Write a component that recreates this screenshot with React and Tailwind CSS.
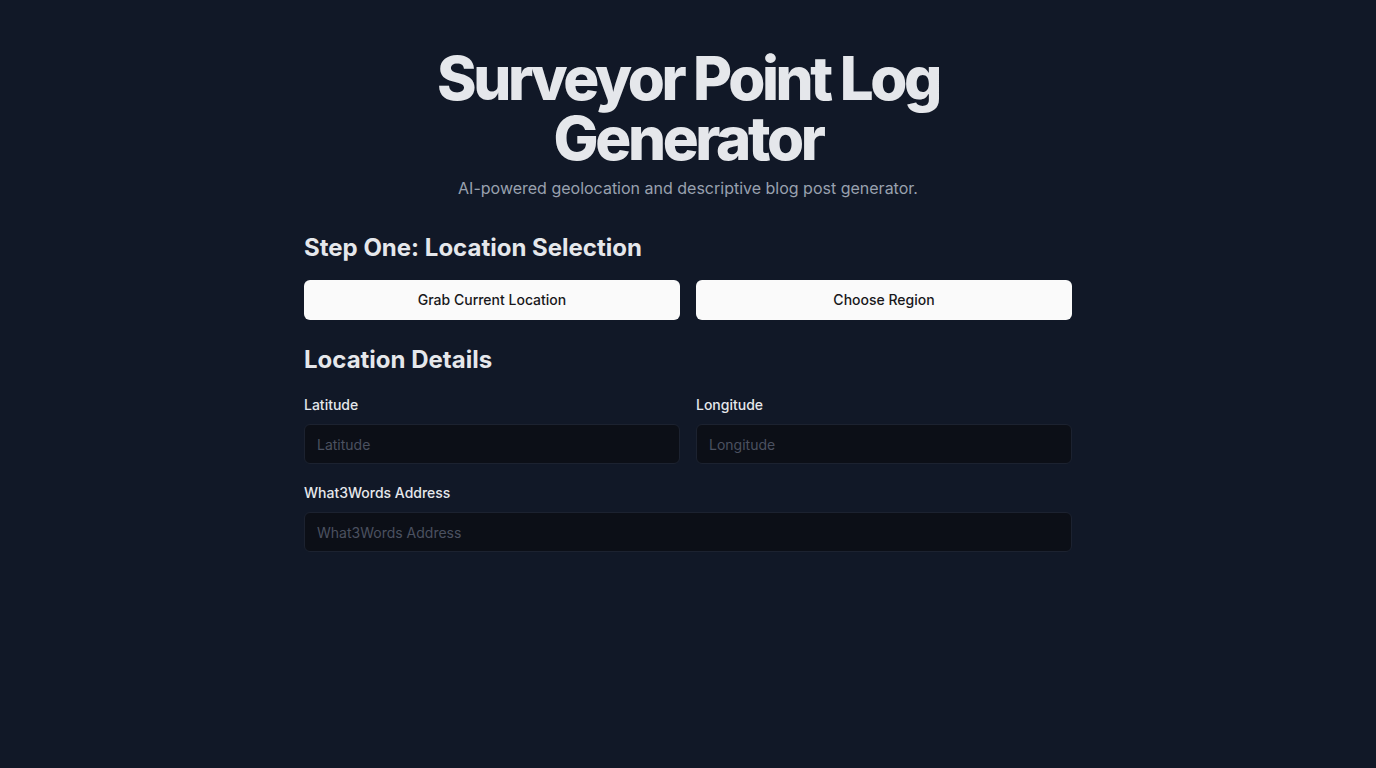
import React from 'react';

const Field = ({ label, placeholder }) => (
  <div className="flex flex-col">
    <label className="text-sm font-medium text-gray-200 leading-5">{label}</label>
    <input
      type="text"
      placeholder={placeholder}
      className="mt-[9px] h-10 w-full rounded-md border border-[#1c2230] bg-[#0c0f17] px-3 text-sm text-gray-200 placeholder:text-[#4b5160] outline-none"
    />
  </div>
);

export default function App() {
  return (
    <div className="min-h-screen bg-[#111827] font-['Inter',sans-serif] text-gray-200">
      <div className="mx-auto w-[768px] pt-12">
        {/* Header */}
        <div className="text-center">
          <h1 className="text-6xl font-extrabold leading-none tracking-[-0.056em] text-[#e5e7eb]">
            Surveyor Point Log
            <br />
            Generator
          </h1>
          <p className="mt-2 text-base text-gray-400">
            AI-powered geolocation and descriptive blog post generator.
          </p>
        </div>

        {/* Step one */}
        <h2 className="mt-8 text-2xl font-bold leading-8 text-[#e5e7eb]">
          Step One: Location Selection
        </h2>
        <div className="mt-4 grid grid-cols-2 gap-4">
          <button className="h-10 rounded-md bg-[#fafafa] text-sm font-medium text-[#18181b]">
            Grab Current Location
          </button>
          <button className="h-10 rounded-md bg-[#fafafa] text-sm font-medium text-[#18181b]">
            Choose Region
          </button>
        </div>

        {/* Location details */}
        <h2 className="mt-6 text-2xl font-bold leading-8 text-[#e5e7eb]">Location Details</h2>
        <div className="mt-[19px] grid grid-cols-2 gap-4">
          <Field label="Latitude" placeholder="Latitude" />
          <Field label="Longitude" placeholder="Longitude" />
        </div>
        <div className="mt-[19px]">
          <Field label="What3Words Address" placeholder="What3Words Address" />
        </div>
      </div>
    </div>
  );
}
